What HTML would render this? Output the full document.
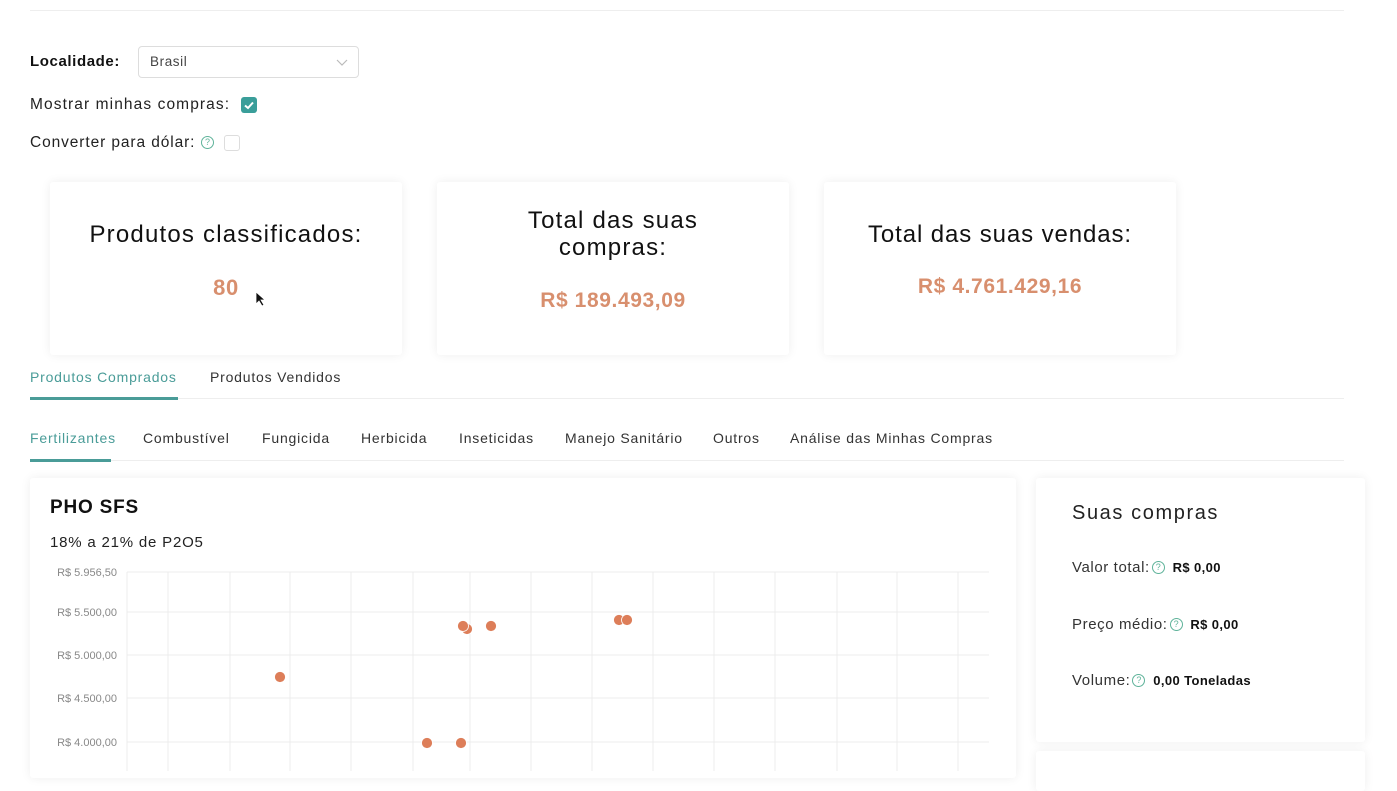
<!DOCTYPE html>
<html><head><meta charset="utf-8"><style>
*{margin:0;padding:0;box-sizing:border-box}
body{width:1397px;height:771px;overflow:hidden;background:#fff;font-family:"Liberation Sans",sans-serif;color:#222;position:relative}
.a{position:absolute;white-space:nowrap}
.card{position:absolute;background:#fff;box-shadow:0 0 10px rgba(0,0,0,0.07);border-radius:3px}
.q{display:inline-block;width:13px;height:13px;border:1.3px solid #5fb39a;border-radius:50%;font-size:9px;line-height:11px;text-align:center;color:#5fb39a;vertical-align:middle;margin:0 3px 2px 2px;letter-spacing:0}
.ct{font-size:24px;color:#111;text-align:center;width:100%;left:0;letter-spacing:1.2px}
.ct.or{color:#d88f6e;font-weight:bold;letter-spacing:0.6px}
.t{font-size:14px;color:#333;letter-spacing:0.8px}
</style></head><body>
<div class="a" style="left:30px;top:10px;width:1314px;height:1px;background:#eee"></div>
<div class="a" style="left:30px;top:53px;font-size:15px;font-weight:bold;color:#111;letter-spacing:0.6px">Localidade:</div>
<div class="a" style="left:138px;top:46px;width:221px;height:32px;border:1px solid #ddd;border-radius:4px"></div>
<div class="a" style="left:150px;top:54px;font-size:13.5px;color:#444;letter-spacing:0.6px">Brasil</div>
<svg class="a" style="left:336px;top:57px" width="12" height="10"><path d="M1 3 L6 8 L11 3" fill="none" stroke="#bbb" stroke-width="1.2"/></svg>
<div class="a" style="left:30px;top:96px;font-size:15.5px;color:#222;letter-spacing:1.1px">Mostrar minhas compras:</div>
<div class="a" style="left:241px;top:97px;width:16px;height:16px;background:#3a9e9a;border-radius:3px"></div>
<svg class="a" style="left:241px;top:97px" width="16" height="16"><path d="M4 8.5 L7 11 L12 5.5" fill="none" stroke="#fff" stroke-width="2"/></svg>
<div class="a" style="left:30px;top:134px;font-size:15.5px;color:#222;letter-spacing:0.9px">Converter para dólar:</div>
<span class="a q" style="left:201px;top:136px;margin:0">?</span>
<div class="a" style="left:224px;top:135px;width:16px;height:16px;border:1px solid #ddd;border-radius:3px"></div>

<div class="card" style="left:50px;top:182px;width:352px;height:173px">
 <div class="a ct" style="top:39px">Produtos classificados:</div>
 <div class="a ct or" style="top:93px;font-size:22px">80</div>
</div>
<svg class="a" style="left:255px;top:291px" width="12" height="16"><path d="M1 1 L1 13 L4 10 L7 15 L9 14 L6 9 L10 9 Z" fill="#111" stroke="#fff" stroke-width="0.8"/></svg>
<div class="card" style="left:437px;top:182px;width:352px;height:173px">
 <div class="a ct" style="top:25px;line-height:27px;white-space:normal;padding:0 70px">Total das suas compras:</div>
 <div class="a ct or" style="top:107px;font-size:21px">R$ 189.493,09</div>
</div>
<div class="card" style="left:824px;top:182px;width:352px;height:173px">
 <div class="a ct" style="top:39px;letter-spacing:0.9px">Total das suas vendas:</div>
 <div class="a ct or" style="top:93px;font-size:21px">R$ 4.761.429,16</div>
</div>

<div class="a" style="left:30px;top:398px;width:1314px;height:1px;background:#eee"></div>
<div class="a t" style="left:30px;top:369px;color:#4a9c98">Produtos Comprados</div>
<div class="a" style="left:30px;top:397px;width:148px;height:3px;background:#4a9c98"></div>
<div class="a t" style="left:210px;top:369px">Produtos Vendidos</div>

<div class="a" style="left:30px;top:460px;width:1314px;height:1px;background:#eee"></div>
<div class="a t" style="left:30px;top:430px;color:#4a9c98">Fertilizantes</div>
<div class="a" style="left:30px;top:459px;width:81px;height:3px;background:#4a9c98"></div>
<div class="a t" style="left:143px;top:430px">Combustível</div>
<div class="a t" style="left:262px;top:430px">Fungicida</div>
<div class="a t" style="left:361px;top:430px">Herbicida</div>
<div class="a t" style="left:459px;top:430px">Inseticidas</div>
<div class="a t" style="left:565px;top:430px">Manejo Sanitário</div>
<div class="a t" style="left:713px;top:430px">Outros</div>
<div class="a t" style="left:790px;top:430px">Análise das Minhas Compras</div>

<div class="card" style="left:30px;top:478px;width:986px;height:300px"></div>
<div class="a" style="left:50px;top:497px;font-size:19px;font-weight:bold;color:#111;letter-spacing:0.8px">PHO SFS</div>
<div class="a" style="left:50px;top:534px;font-size:15px;color:#222;letter-spacing:0.8px">18% a 21% de P2O5</div>
<svg class="a" style="left:0;top:560px" width="1016" height="211">
<g stroke="#ececec" stroke-width="1">
<line x1="127" y1="12" x2="989" y2="12"/><line x1="127" y1="52" x2="989" y2="52"/><line x1="127" y1="95" x2="989" y2="95"/><line x1="127" y1="138" x2="989" y2="138"/><line x1="127" y1="182" x2="989" y2="182"/>
<line x1="127" y1="12" x2="127" y2="211"/><line x1="168" y1="12" x2="168" y2="211"/><line x1="230" y1="12" x2="230" y2="211"/><line x1="290" y1="12" x2="290" y2="211"/><line x1="351" y1="12" x2="351" y2="211"/><line x1="413" y1="12" x2="413" y2="211"/><line x1="470" y1="12" x2="470" y2="211"/><line x1="531" y1="12" x2="531" y2="211"/><line x1="592" y1="12" x2="592" y2="211"/><line x1="653" y1="12" x2="653" y2="211"/><line x1="714" y1="12" x2="714" y2="211"/><line x1="775" y1="12" x2="775" y2="211"/><line x1="837" y1="12" x2="837" y2="211"/><line x1="897" y1="12" x2="897" y2="211"/><line x1="958" y1="12" x2="958" y2="211"/>
</g>
<g font-family="Liberation Sans" font-size="11" fill="#888" text-anchor="end">
<text x="117" y="16">R$ 5.956,50</text><text x="117" y="56">R$ 5.500,00</text><text x="117" y="99">R$ 5.000,00</text><text x="117" y="142">R$ 4.500,00</text><text x="117" y="186">R$ 4.000,00</text>
</g>
<g fill="#dd7e59" stroke="#fff" stroke-width="0.8">
<circle cx="280" cy="117" r="5.5"/><circle cx="467" cy="69" r="5.5"/><circle cx="463" cy="66" r="5.5"/><circle cx="491" cy="66" r="5.5"/><circle cx="619" cy="60" r="5.5"/><circle cx="627" cy="60" r="5.5"/><circle cx="427" cy="183" r="5.5"/><circle cx="461" cy="183" r="5.5"/>
</g>
</svg>

<div class="card" style="left:1036px;top:478px;width:329px;height:264px"></div>
<div class="card" style="left:1036px;top:751px;width:329px;height:40px"></div>
<div class="a" style="left:1072px;top:502px;font-size:20px;color:#222;letter-spacing:1.6px">Suas compras</div>
<div class="a" style="left:1072px;top:559px;font-size:15px;color:#333;letter-spacing:0.6px">Valor total:<span class="q">?</span> <b style="font-size:13px;color:#111;letter-spacing:0.4px">R$ 0,00</b></div>
<div class="a" style="left:1072px;top:616px;font-size:15px;color:#333;letter-spacing:0.6px">Preço médio:<span class="q">?</span> <b style="font-size:13px;color:#111;letter-spacing:0.4px">R$ 0,00</b></div>
<div class="a" style="left:1072px;top:672px;font-size:15px;color:#333;letter-spacing:0.6px">Volume:<span class="q">?</span> <b style="font-size:13px;color:#111;letter-spacing:0.4px">0,00 Toneladas</b></div>
</body></html>
